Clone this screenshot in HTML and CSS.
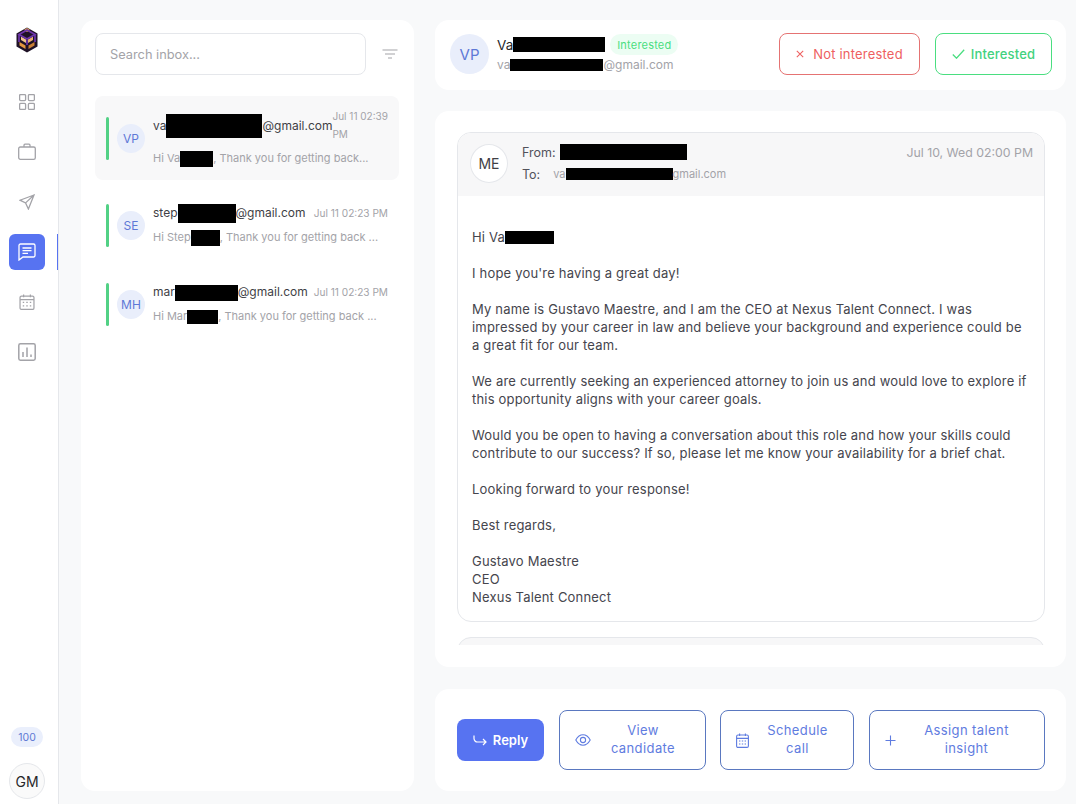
FILE: index.html
```html
<!DOCTYPE html>
<html lang="en">

<head>
    <meta charset="UTF-8">
    <meta name="viewport" content="width=device-width, initial-scale=1.0">
    <title>Inbox</title>
    <link rel="stylesheet" href="styles.css">
</head>

<body>
    <div class="app">
        <aside class="sidebar">
            <svg class="logo" viewBox="0 0 22 26" width="22" height="26">
                <path d="M11 0.5 L21.5 6.5 V19.5 L11 25.5 L0.5 19.5 V6.5 Z" fill="#1f1226" />
                <path d="M11 1 L14 3 L11 5 L8 3 Z" fill="#e9a65a" />
                <path d="M5 9.5 L10 12.5 V16 L5 13 Z" fill="#f0c48e" />
                <path d="M17 9.5 L12 12.5 V16 L17 13 Z" fill="#e8b070" />
                <path d="M3.5 15 L9.5 18.5 V22 L3.5 18.5 Z" fill="#e2953f" />
                <path d="M18.5 15 L12.5 18.5 V22 L18.5 18.5 Z" fill="#c97f35" />
                <path d="M3 7.5 L11 3 L19 7.5 L11 12 Z M11 12 V18 M3 7.5 V15 M19 7.5 V15" fill="none" stroke="#6d35ab" stroke-width="1.7" />
            </svg>
            <nav class="nav">
                <a class="nav-item">
                    <svg class="nav-icon" viewBox="0 0 16 16" fill="none">
                        <rect x="0.6" y="0.6" width="6" height="6" rx="1" />
                        <rect x="9.4" y="0.6" width="6" height="6" rx="1" />
                        <rect x="0.6" y="9.4" width="6" height="6" rx="1" />
                        <rect x="9.4" y="9.4" width="6" height="6" rx="1" />
                    </svg>
                </a>
                <a class="nav-item">
                    <svg class="nav-icon wide" viewBox="0 0 18 18" fill="none">
                        <rect x="0.7" y="4" width="16.6" height="12.3" rx="1.6" />
                        <path d="M6 4 V2.2 A1 1 0 0 1 7 1.2 H11 A1 1 0 0 1 12 2.2 V4" />
                    </svg>
                </a>
                <a class="nav-item">
                    <svg class="nav-icon" viewBox="0 0 16 16" fill="none">
                        <path d="M15 1 L1 6.2 L6.6 8.9 L9.4 15 Z M15 1 L6.6 8.9" />
                    </svg>
                </a>
                <a class="nav-item active">
                    <svg class="nav-icon wide" viewBox="0 0 18 18" fill="none">
                        <path d="M2.5 1 H15.5 A1.5 1.5 0 0 1 17 2.5 V12.5 A1.5 1.5 0 0 1 15.5 14 H5 L1 17 V2.5 A1.5 1.5 0 0 1 2.5 1 Z" />
                        <path d="M4.5 5 H13.5 M4.5 7.7 H13.5 M4.5 10.4 H10" />
                    </svg>
                </a>
                <a class="nav-item">
                    <svg class="nav-icon" viewBox="0 0 16 17" fill="none">
                        <rect x="0.6" y="2.2" width="14.8" height="14.2" rx="1.6" />
                        <path d="M0.6 6 H15.4 M4.4 0.4 V3.4 M11.6 0.4 V3.4" />
                        <path d="M3.5 9 H5 M7.2 9 H8.8 M11 9 H12.5 M3.5 12.5 H5 M7.2 12.5 H8.8 M11 12.5 H12.5" />
                    </svg>
                </a>
                <a class="nav-item">
                    <svg class="nav-icon wide chart" viewBox="0 0 18 18" fill="none">
                        <rect x="0.8" y="0.8" width="16.4" height="16.4" rx="1.6" />
                        <path d="M5 14 V9 M9 14 V4.5 M13 14 V11.5" />
                    </svg>
                </a>
            </nav>
            <div class="sidebar-bottom">
                <span class="credits">100</span>
                <span class="user-avatar">GM</span>
            </div>
        </aside>

        <main class="content">
            <section class="card inbox">
                <div class="search-row">
                    <input class="search" type="text" placeholder="Search inbox...">
                    <svg class="filter-icon" viewBox="0 0 16 10" width="16" height="10" fill="none">
                        <path d="M0.5 1 H15.5 M3 5 H13 M6 9 H10" />
                    </svg>
                </div>
                <div class="thread-list">
                    <div class="thread selected">
                        <span class="thread-bar"></span>
                        <span class="avatar small">VP</span>
                        <div class="thread-body">
                            <div class="thread-top">
                                <span class="thread-email">va<span class="redact r-mail1"></span>@gmail.com</span>
                                <span class="thread-date">Jul 11 02:39 PM</span>
                            </div>
                            <p class="thread-preview">Hi Va<span class="redact r-name1"></span>, Thank you for getting back...</p>
                        </div>
                    </div>
                    <div class="thread">
                        <span class="thread-bar"></span>
                        <span class="avatar small">SE</span>
                        <div class="thread-body">
                            <div class="thread-top">
                                <span class="thread-email">step<span class="redact r-mail2"></span>@gmail.com</span>
                                <span class="thread-date">Jul 11 02:23 PM</span>
                            </div>
                            <p class="thread-preview">Hi Step<span class="redact r-name2"></span>, Thank you for getting back ...</p>
                        </div>
                    </div>
                    <div class="thread">
                        <span class="thread-bar"></span>
                        <span class="avatar small">MH</span>
                        <div class="thread-body">
                            <div class="thread-top">
                                <span class="thread-email">mar<span class="redact r-mail3"></span>@gmail.com</span>
                                <span class="thread-date">Jul 11 02:23 PM</span>
                            </div>
                            <p class="thread-preview">Hi Mar<span class="redact r-name3"></span>, Thank you for getting back ...</p>
                        </div>
                    </div>
                </div>
            </section>

            <div class="detail">
                <section class="card detail-head">
                    <span class="avatar large">VP</span>
                    <div class="contact">
                        <div class="contact-name">
                            <span>Va<span class="redact r-head1"></span></span>
                            <span class="pill">Interested</span>
                        </div>
                        <div class="contact-mail">va<span class="redact r-head2"></span>@gmail.com</div>
                    </div>
                    <button class="btn-status red">
                        <svg viewBox="0 0 10 10" width="8" height="8" fill="none"><path d="M1 1 L9 9 M9 1 L1 9" /></svg>
                        Not interested
                    </button>
                    <button class="btn-status green">
                        <svg viewBox="0 0 13 10" width="13" height="10" fill="none"><path d="M0.8 5.5 L4.5 9.2 L12.2 0.8" /></svg>
                        Interested
                    </button>
                </section>

                <section class="card messages">
                    <div class="message-scroll">
                        <article class="message">
                            <header class="message-head">
                                <span class="avatar me">ME</span>
                                <div class="message-meta">
                                    <div class="from">From: <span class="redact r-from"></span></div>
                                    <div class="to"><span class="to-label">To:</span> <span class="to-mail">va<span class="redact r-to"></span>gmail.com</span></div>
                                </div>
                                <span class="message-date">Jul 10, Wed 02:00 PM</span>
                            </header>
                            <div class="message-body">
                                <p>Hi Va<span class="redact r-hi"></span></p>
                                <p>I hope you're having a great day!</p>
                                <p>My name is Gustavo Maestre, and I am the CEO at Nexus Talent Connect. I was<br>impressed by your career in law and believe your background and experience could be<br>a great fit for our team.</p>
                                <p>We are currently seeking an experienced attorney to join us and would love to explore if<br>this opportunity aligns with your career goals.</p>
                                <p>Would you be open to having a conversation about this role and how your skills could<br>contribute to our success? If so, please let me know your availability for a brief chat.</p>
                                <p>Looking forward to your response!</p>
                                <p>Best regards,</p>
                                <p>Gustavo Maestre<br>CEO<br>Nexus Talent Connect</p>
                            </div>
                        </article>
                        <article class="message next"></article>
                    </div>
                </section>

                <section class="card actions">
                    <button class="btn-reply">
                        <svg viewBox="0 0 14 11" width="14" height="11" fill="none"><path d="M1 0.5 V3.5 A3.5 3.5 0 0 0 4.5 7 H13 M10 4 L13 7 L10 10" /></svg>
                        Reply
                    </button>
                    <button class="btn-outline view">
                        <svg viewBox="0 0 16 12" width="16" height="12" fill="none"><path d="M0.8 6 C3 2 5.5 0.8 8 0.8 C10.5 0.8 13 2 15.2 6 C13 10 10.5 11.2 8 11.2 C5.5 11.2 3 10 0.8 6 Z" /><circle cx="8" cy="6" r="2.6" /></svg>
                        <span>View<br>candidate</span>
                    </button>
                    <button class="btn-outline schedule">
                        <svg viewBox="0 0 13 15" width="13" height="15" fill="none"><rect x="0.6" y="2" width="11.8" height="12.4" rx="1.4" /><path d="M0.6 5.4 H12.4 M3.6 0.4 V3 M9.4 0.4 V3 M3 8 H4.4 M5.8 8 H7.2 M8.6 8 H10 M3 11 H4.4 M5.8 11 H7.2 M8.6 11 H10" /></svg>
                        <span>Schedule<br>call</span>
                    </button>
                    <button class="btn-outline assign">
                        <svg viewBox="0 0 11 11" width="11" height="11" fill="none"><path d="M5.5 0.5 V10.5 M0.5 5.5 H10.5" /></svg>
                        <span>Assign talent<br>insight</span>
                    </button>
                </section>
            </div>
        </main>
    </div>
</body>

</html>
```
FILE: styles.css
```css
* {
    margin: 0;
    padding: 0;
    box-sizing: border-box;
}

body {
    font-family: Inter, "Noto Sans", sans-serif;
    font-size: 12px;
    background-color: #f8f9fa;
    color: #3f3f46;
    height: 100vh;
    overflow: hidden;
}

button {
    font-family: inherit;
    background: none;
    cursor: pointer;
}

.app {
    display: flex;
    height: 100%;
}

/* sidebar */
.sidebar {
    width: 59px;
    flex-shrink: 0;
    background-color: #fff;
    border-right: 1px solid #e5e7eb;
    display: flex;
    flex-direction: column;
    align-items: center;
    padding: 27px 4px 5px 0;
}

.logo {
    display: block;
}

.nav {
    display: flex;
    flex-direction: column;
    gap: 14px;
    margin-top: 31px;
}

.nav-item {
    width: 36px;
    height: 36px;
    border-radius: 6px;
    display: flex;
    align-items: center;
    justify-content: center;
    position: relative;
}

.nav-icon {
    width: 16px;
    height: 16px;
    stroke: #a3a3a8;
    stroke-width: 1.3;
}

.nav-icon.wide {
    width: 18px;
    height: 18px;
}

.nav-icon.chart {
    stroke-width: 1.5;
}

.nav-item.active {
    background-color: #5773f1;
}

.nav-item.active .nav-icon {
    stroke: #fff;
}

.nav-item.active::after {
    content: "";
    position: absolute;
    left: 48px;
    top: 0;
    width: 1px;
    height: 36px;
    background-color: #5773f1;
}

.sidebar-bottom {
    margin-top: auto;
    display: flex;
    flex-direction: column;
    align-items: center;
    gap: 16px;
}

.credits {
    width: 32px;
    height: 20px;
    border-radius: 10px;
    background-color: #eaeffc;
    color: #6079d4;
    font-size: 10.5px;
    display: flex;
    align-items: center;
    justify-content: center;
}

.user-avatar {
    width: 36px;
    height: 36px;
    border-radius: 50%;
    border: 1px solid #e5e7eb;
    background-color: #fafafa;
    color: #27272a;
    font-size: 14px;
    display: flex;
    align-items: center;
    justify-content: center;
}

/* main layout */
.content {
    flex: 1;
    display: flex;
    gap: 21px;
    padding: 20px 10px 13px 22px;
    min-width: 0;
}

.card {
    background-color: #fff;
    border-radius: 14px;
}

.detail {
    width: 631px;
    display: flex;
    flex-direction: column;
    gap: 21px;
}

.redact {
    display: inline-block;
    background-color: #000;
    vertical-align: middle;
}

.avatar {
    flex-shrink: 0;
    border-radius: 50%;
    background-color: #e9eefb;
    color: #5e78d6;
    display: flex;
    align-items: center;
    justify-content: center;
}

.avatar.small {
    width: 28px;
    height: 29px;
    font-size: 12px;
}

.avatar.large {
    width: 39px;
    height: 40px;
    font-size: 15px;
}

.avatar.me {
    width: 38px;
    height: 39px;
    font-size: 14px;
    background-color: #fff;
    color: #3f3f46;
    border: 1px solid #e5e7eb;
}

/* inbox list */
.inbox {
    width: 333px;
    flex-shrink: 0;
    padding: 13px 15px 0 14px;
}

.search-row {
    display: flex;
    align-items: center;
    gap: 16px;
    margin-bottom: 21px;
}

.search {
    width: 271px;
    height: 42px;
    border: 1px solid #e5e7eb;
    border-radius: 8px;
    padding: 0 14px;
    font-family: inherit;
    font-size: 12.8px;
    outline: none;
}

.search::placeholder {
    color: #a3a3a8;
}

.filter-icon {
    stroke: #a3a3a8;
    stroke-width: 1.2;
}

.thread {
    display: flex;
    align-items: center;
    padding: 20px 11px;
    border-radius: 8px;
    height: 79px;
}

.thread.selected {
    height: 84px;
    background-color: #f8f8f9;
    margin-bottom: 6px;
}

.thread-bar {
    width: 3px;
    height: 43px;
    border-radius: 2px;
    background-color: #52d185;
    margin-right: 8px;
    flex-shrink: 0;
}

.thread-body {
    margin-left: 8px;
    padding-bottom: 4px;
    flex: 1;
    min-width: 0;
}

.thread-top {
    display: flex;
    justify-content: space-between;
    align-items: center;
}

.thread-email {
    font-size: 12px;
    color: #3f3f46;
    white-space: nowrap;
}

.thread-date {
    font-size: 10.1px;
    line-height: 18px;
    color: #a3a3a8;
    flex-shrink: 0;
    white-space: nowrap;
}

.selected .thread-date {
    width: 56px;
    font-size: 10px;
    white-space: normal;
}

.thread-preview {
    font-size: 11px;
    line-height: 13px;
    color: #a3a3a8;
    margin-top: 9px;
    white-space: nowrap;
}

.r-mail1 { width: 96px; height: 24px; margin: -6px 0; }
.r-mail2 { width: 58px; height: 19px; margin: -4px 0; }
.r-mail3 { width: 63px; height: 16px; margin: -3px 0; }
.r-name1 { width: 33px; height: 16px; margin: -3px 0; }
.r-name2 { width: 29px; height: 16px; margin: -3px 0; }
.r-name3 { width: 31px; height: 14px; margin: -3px 0; }

/* contact header */
.detail-head {
    height: 70px;
    display: flex;
    align-items: center;
    padding: 0 14px 2px 15px;
}

.contact {
    margin-left: 8px;
    padding-bottom: 2px;
    flex: 1;
}

.contact-name {
    display: flex;
    align-items: center;
    gap: 5px;
    font-size: 13.5px;
    color: #27272a;
}

.r-head1 { width: 92px; height: 15px; margin: -2px 0 0 0; }
.r-head2 { width: 93px; height: 12px; margin: -2px 0 0 0; }

.pill {
    height: 21px;
    padding: 0 7px;
    border-radius: 11px;
    background-color: #ecfdf3;
    color: #4ade80;
    font-size: 11px;
    letter-spacing: 0.2px;
    display: flex;
    align-items: center;
}

.contact-mail {
    font-size: 12px;
    color: #a3a3a8;
    margin-top: 2px;
}

.btn-status {
    height: 42px;
    border-radius: 8px;
    font-size: 13px;
    letter-spacing: 0.2px;
    display: flex;
    align-items: center;
    justify-content: center;
    gap: 9px;
}

.btn-status svg {
    stroke-width: 1.3;
}

.btn-status.red {
    width: 141px;
    border: 1px solid #e57373;
    color: #ee5f5f;
    margin-right: 15px;
}

.btn-status.red svg {
    stroke: #ee5f5f;
}

.btn-status.green {
    width: 117px;
    border: 1px solid #4ade80;
    color: #42d27e;
    font-weight: 500;
    gap: 6px;
}

.btn-status.green svg {
    stroke: #4ade80;
}

/* messages */
.messages {
    height: 556px;
    padding: 21px 21px 22px 22px;
}

.message-scroll {
    height: 513px;
    overflow: hidden;
}

.message {
    border: 1px solid #e5e7eb;
    border-radius: 14px;
    overflow: hidden;
}

.message.next {
    height: 40px;
    margin-top: 15px;
    background-color: #f7f7f8;
}

.message-head {
    height: 63px;
    background-color: #f7f7f8;
    display: flex;
    align-items: flex-start;
    padding: 11px 11px 0 12px;
}

.message-meta {
    margin: -1px 0 0 14px;
    flex: 1;
    font-size: 12.5px;
    color: #52525b;
}

.from {
    height: 18px;
    display: flex;
    align-items: center;
    gap: 4px;
}

.r-from { width: 127px; height: 16px; }

.to {
    margin-top: 4px;
    display: flex;
    align-items: center;
    gap: 13px;
    height: 18px;
}

.to-mail {
    font-size: 11px;
    color: #a3a3a8;
}

.r-to { width: 107px; height: 12px; margin: -2px 0 0 0; }

.message-date {
    font-size: 12.3px;
    color: #a3a3a8;
    line-height: 18px;
}

.message-body {
    padding: 32px 14px 15px;
    font-size: 13px;
    letter-spacing: 0.19px;
    line-height: 18px;
    color: #45454d;
}

.message-body p {
    margin-bottom: 18px;
}

.message-body p:last-child {
    margin-bottom: 0;
}

.r-hi { width: 49px; height: 13px; margin: -2px 0 0 0; }

/* actions */
.actions {
    flex: 1;
    display: flex;
    align-items: center;
    margin-top: 1px;
    padding: 0 21px 0 22px;
}

.btn-reply {
    width: 87px;
    height: 42px;
    border: none;
    border-radius: 8px;
    background-color: #5773f1;
    color: #fff;
    font-size: 13px;
    font-weight: 600;
    display: flex;
    align-items: center;
    justify-content: center;
    gap: 6px;
    margin-right: 15px;
}

.btn-reply svg {
    stroke: #fff;
    stroke-width: 1.2;
}

.btn-outline {
    height: 60px;
    border: 1px solid #5a78c0;
    border-radius: 8px;
    color: #5f7ce0;
    font-size: 13px;
    letter-spacing: 0.4px;
    line-height: 18px;
    display: flex;
    align-items: center;
    padding: 0 10px 0 15px;
}

.btn-outline svg {
    stroke: #5f7ce0;
    stroke-width: 1.1;
    flex-shrink: 0;
}

.btn-outline span {
    flex: 1;
    text-align: center;
    padding-bottom: 2px;
}

.btn-outline.view { width: 147px; margin-right: 14px; }
.btn-outline.schedule { width: 134px; margin-right: 15px; padding-right: 7px; }
.btn-outline.assign { width: 176px; padding-right: 7px; }
```
